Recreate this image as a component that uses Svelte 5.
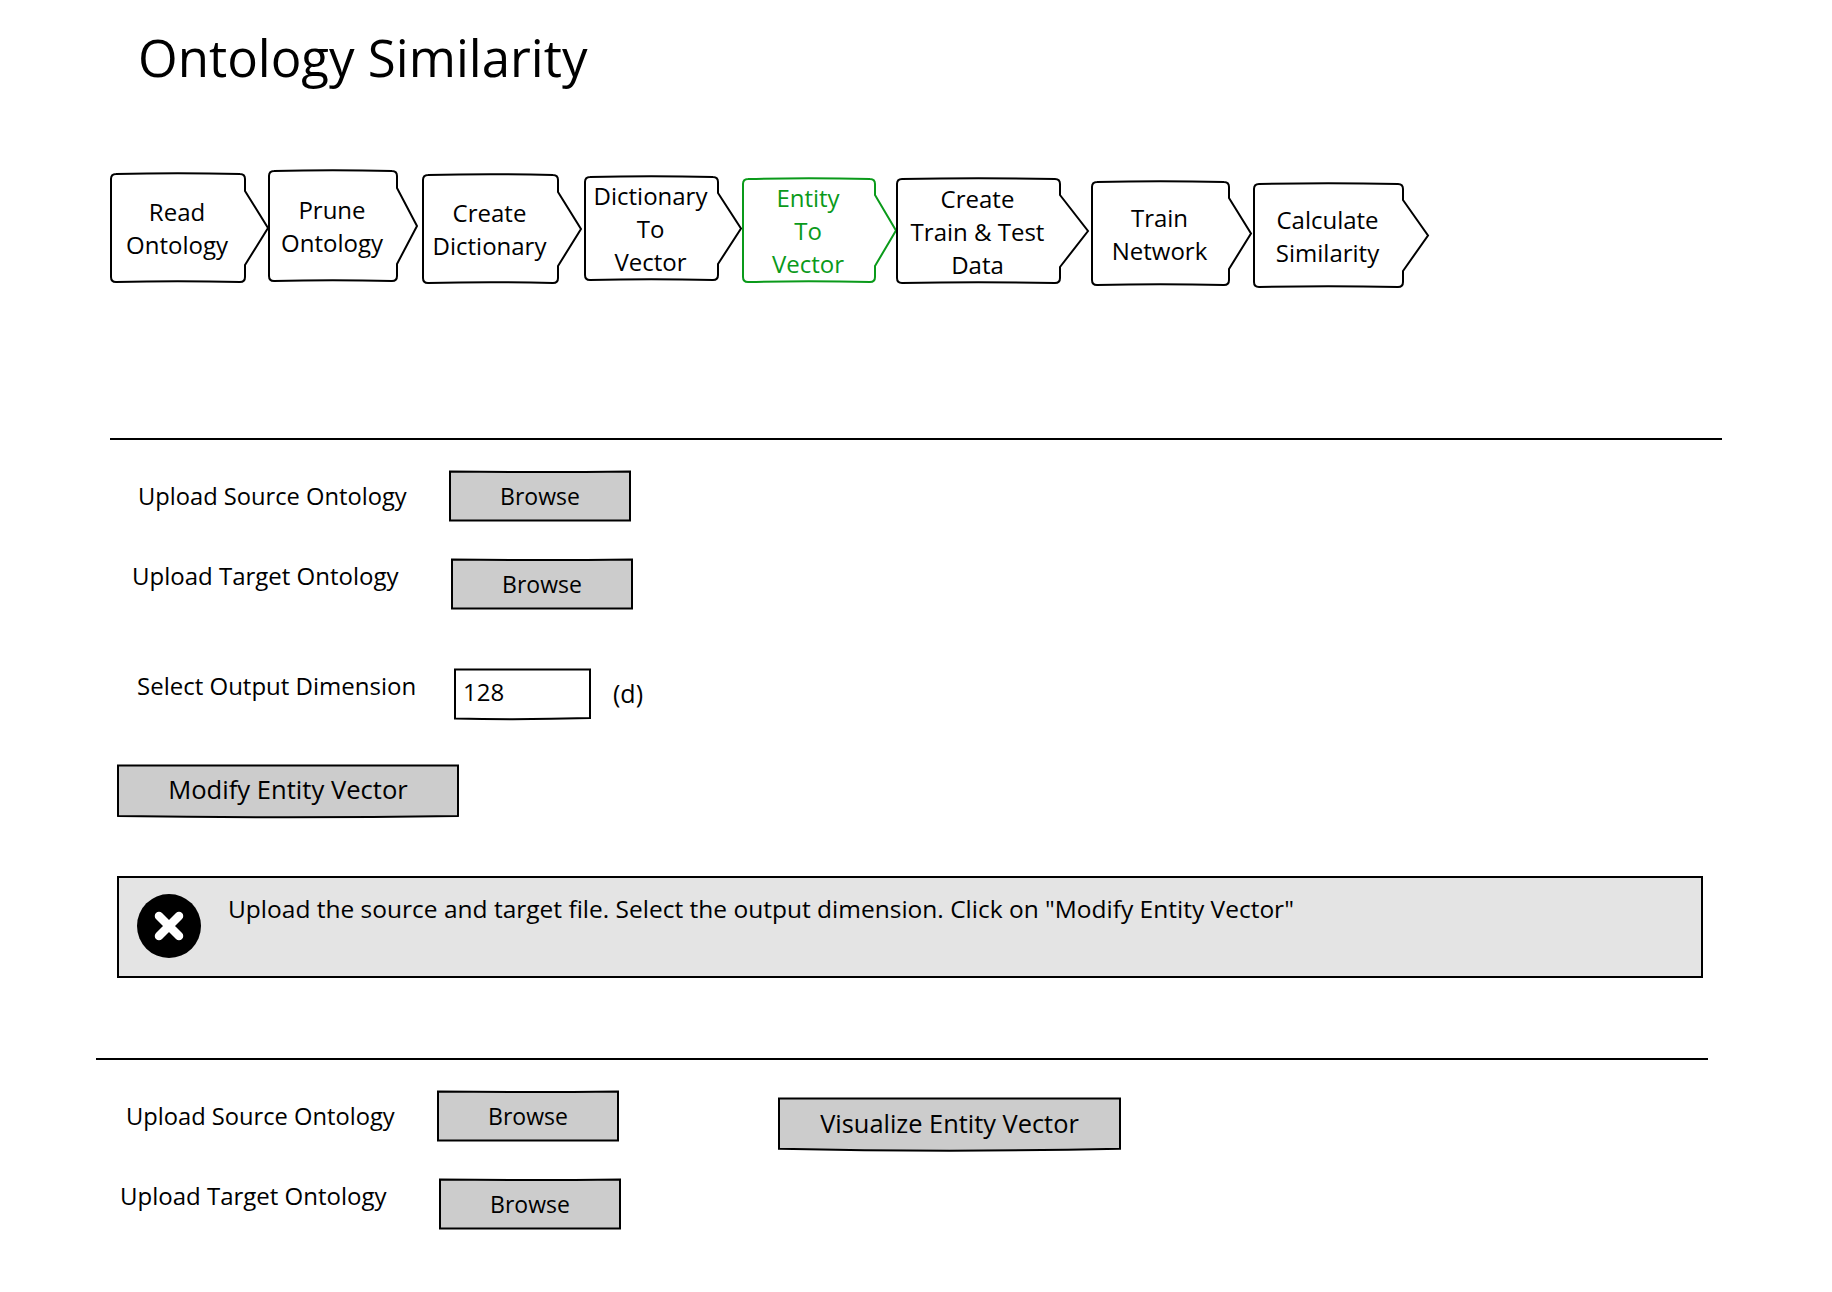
<script lang="ts">
	type Step = { lines: string[]; body: number; tip: number; height: number; top: number; gap: number; active?: boolean }

	// Process strip, left to right
	const steps: Step[] = [
		{ lines: ['Read', 'Ontology'], body: 134, tip: 24, height: 110, top: 3, gap: 0 },
		{ lines: ['Prune', 'Ontology'], body: 128, tip: 21, height: 112, top: 0, gap: 0 },
		{ lines: ['Create', 'Dictionary'], body: 135, tip: 24, height: 110, top: 4, gap: 5 },
		{ lines: ['Dictionary', 'To', 'Vector'], body: 133, tip: 24, height: 105, top: 6, gap: 3 },
		{ lines: ['Entity', 'To', 'Vector'], body: 132, tip: 22, height: 105, top: 8, gap: 1, active: true },
		{ lines: ['Create', 'Train & Test', 'Data'], body: 163, tip: 29, height: 106, top: 8, gap: 0 },
		{ lines: ['Train', 'Network'], body: 137, tip: 23, height: 105, top: 11, gap: 3 },
		{ lines: ['Calculate', 'Similarity'], body: 149, tip: 26, height: 105, top: 13, gap: 2 },
	]

	const chevronPath = (s: Step) => {
		const r = 5
		const w = s.body + 1
		const h = s.height
		const notch = Math.round(h * 0.16)
		return [
			`M 1 ${r + 1}`,
			`Q 1 1 ${r + 1} 1`,
			`Q ${w / 2} -0.5 ${w - r} 1`,
			`Q ${w} 1 ${w} ${r + 1}`,
			`L ${w} ${notch}`,
			`L ${w + s.tip - 1} ${h / 2}`,
			`L ${w} ${h - notch}`,
			`L ${w} ${h - r - 1}`,
			`Q ${w} ${h - 1} ${w - r} ${h - 1}`,
			`Q ${w / 2} ${h - 2.5} ${r + 1} ${h - 1}`,
			`Q 1 ${h - 1} 1 ${h - r - 1}`,
			'Z',
		].join(' ')
	}
</script>

{#snippet sketchEdge(d: string)}
	<svg class="edge" viewBox="0 0 100 100" preserveAspectRatio="none" aria-hidden="true">
		<path {d} vector-effect="non-scaling-stroke" />
	</svg>
{/snippet}

{#snippet uploads()}
	<div class="uploads">
		<div class="row">
			<span class="label source">Upload Source Ontology</span>
			<div class="sketch browse">
				{@render sketchEdge('M0 1 Q50 3 100 1 L100 99 L0 99 Z')}
				<span>Browse</span>
			</div>
		</div>
		<div class="row second">
			<span class="label target">Upload Target Ontology</span>
			<div class="sketch browse">
				{@render sketchEdge('M0 1 Q50 3 100 1 L100 99 L0 99 Z')}
				<span>Browse</span>
			</div>
		</div>
	</div>
{/snippet}

<div class="page">
	<h1 class="title">Ontology Similarity</h1>

	<div class="steps">
		{#each steps as step}
			<div
				class="step"
				class:active={step.active}
				style:width="{step.body + step.tip}px"
				style:height="{step.height}px"
				style:margin-top="{step.top}px"
				style:margin-left="{step.gap}px"
			>
				<svg
					class="chevron"
					width={step.body + step.tip}
					height={step.height}
					viewBox="0 0 {step.body + step.tip} {step.height}"
					aria-hidden="true"
				>
					<path d={chevronPath(step)} />
				</svg>
				<div class="step-text" style:width="{step.body}px">
					{#each step.lines as line}
						<div>{line}</div>
					{/each}
				</div>
			</div>
		{/each}
	</div>

	<div class="rule first"></div>

	<section class="top">
		{@render uploads()}

		<div class="row dimension">
			<span class="label select">Select Output Dimension</span>
			<div class="sketch input">
				{@render sketchEdge('M0 1 L100 1 L100 98 Q50 102 0 99 Z')}
				<span>128</span>
			</div>
			<span class="unit">(d)</span>
		</div>

		<div class="sketch action modify">
			{@render sketchEdge('M0 1 L100 1 L100 96 Q50 101 0 96 Z')}
			<span>Modify Entity Vector</span>
		</div>

		<div class="message">
			<svg class="error-icon" width="64" height="64" viewBox="0 0 64 64" aria-hidden="true">
				<circle cx="32" cy="32" r="32" fill="#000" />
				<path d="M22 22 L42 42 M42 22 L22 42" stroke="#fff" stroke-width="8.5" stroke-linecap="round" />
			</svg>
			<p>Upload the source and target file. Select the output dimension. Click on "Modify Entity Vector"</p>
		</div>
	</section>

	<div class="rule second-rule"></div>

	<section class="bottom">
		{@render uploads()}
		<div class="sketch action visualize">
			{@render sketchEdge('M0 1 L100 1 L100 94 Q50 101 0 94 Z')}
			<span>Visualize Entity Vector</span>
		</div>
	</section>
</div>

<style>
	:global(body) {
		margin: 0;
		background: #fff;
	}

	.page {
		width: 1832px;
		height: 1292px;
		box-sizing: border-box;
		padding-top: 22px;
		overflow: hidden;
		font-family: 'Open Sans', 'Noto Sans', sans-serif;
		font-size: 24px;
		color: #000;
	}

	.title {
		margin: 0 0 0 138px;
		height: 72px;
		font-size: 51px;
		line-height: 70px;
		font-weight: 400;
	}

	.steps {
		display: flex;
		align-items: flex-start;
		margin: 76px 0 0 110px;
		height: 117px;
	}

	.step {
		position: relative;
		flex: none;
	}

	.chevron {
		position: absolute;
		inset: 0;
		overflow: visible;
	}

	.chevron path {
		fill: #fff;
		stroke: #000;
		stroke-width: 2;
	}

	.step.active {
		color: #0a9a1a;
	}

	.step.active .chevron path {
		stroke: #0a9a1a;
	}

	.step-text {
		position: relative;
		display: flex;
		flex-direction: column;
		justify-content: center;
		height: 100%;
		text-align: center;
		line-height: 33px;
	}

	.rule {
		height: 2px;
		background: #000;
	}

	.rule.first {
		width: 1612px;
		margin: 151px 0 0 110px;
	}

	.rule.second-rule {
		width: 1612px;
		margin: 80px 0 0 96px;
	}

	.uploads {
		display: flex;
		flex-direction: column;
		gap: 38px;
	}

	.row {
		display: flex;
		align-items: center;
	}

	.row.second {
		margin-left: -6px;
	}

	.label {
		flex: none;
	}

	.label.source {
		width: 312px;
		font-size: 23.7px;
	}

	.label.target {
		width: 320px;
		margin-bottom: 17px;
	}

	.label.select {
		width: 318px;
		margin-bottom: 17px;
	}

	.sketch {
		position: relative;
		flex: none;
		display: flex;
		align-items: center;
		justify-content: center;
		box-sizing: border-box;
	}

	.sketch span {
		position: relative;
	}

	.edge {
		position: absolute;
		inset: 0;
		width: 100%;
		height: 100%;
		overflow: visible;
	}

	.edge path {
		fill: #ccc;
		stroke: #000;
		stroke-width: 2;
	}

	.browse {
		width: 180px;
		height: 50px;
		font-size: 23px;
	}

	.top {
		padding-top: 31px;
	}

	.top .uploads {
		padding-left: 138px;
	}

	.dimension {
		margin: 60px 0 0 137px;
	}

	.input {
		width: 135px;
		height: 50px;
		justify-content: flex-start;
		padding: 0 0 6px 8px;
	}

	.input .edge path {
		fill: #fff;
	}

	.unit {
		margin-left: 23px;
		margin-top: -2px;
		font-size: 25px;
	}

	.action {
		padding-bottom: 4px;
		font-size: 25.6px;
	}

	.modify {
		width: 340px;
		height: 53px;
		margin: 46px 0 0 118px;
	}

	.message {
		display: flex;
		align-items: flex-start;
		gap: 27px;
		box-sizing: border-box;
		width: 1586px;
		height: 102px;
		margin: 58px 0 0 117px;
		padding: 16px 18px;
		background: #e4e4e4;
		border: 2px solid #000;
		font-size: 24.5px;
	}

	.error-icon {
		flex: none;
	}

	.message p {
		margin: 0;
		line-height: 30px;
	}

	.bottom {
		display: flex;
		align-items: flex-start;
		padding: 31px 0 0 126px;
	}

	.visualize {
		width: 341px;
		height: 54px;
		margin: 7px 0 0 159px;
		font-size: 25.4px;
	}
</style>
